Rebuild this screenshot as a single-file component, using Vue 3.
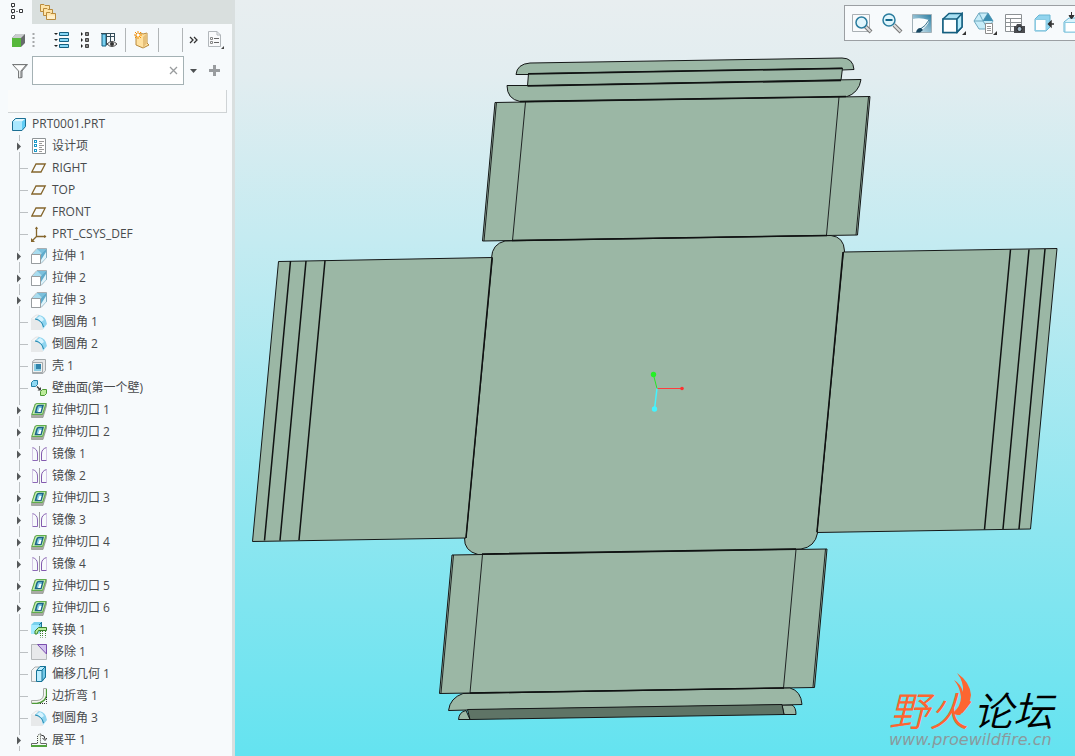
<template>
    <div class="workspace">
        <!-- Shared icon shapes -->
        <svg class="sprite" aria-hidden="true">
            <symbol id="part" viewBox="0 0 16 16">
                <path d="M.5 5.500 3.500 2.500H13.500V10.500L10 14.500H.5Z" fill="#62cdf5" stroke="#1c6f93" />
                <path d="M1 5.500H10V14H1Z" fill="#a9e8ff" />
                <path d="M1 5.500 4 3H13L10 5.500Z" fill="#e0f8ff" />
            </symbol>
            <symbol id="design" viewBox="0 0 16 16">
                <path d="M1.500.5H14.500V15.500H1.500Z" fill="#fff" stroke="#8f9497" />
                <path d="M3 2h3v3H3zM3 6h3v3H3zM3 11h3v3H3z" fill="#1d9ac9" />
                <path d="M4 3h1v1H4zM4 7h1v1H4zM4 12h1v1H4z" fill="#fff" />
                <path d="M8 3.500h5M8 5.500h3M8 7.500h5M8 9.500h3M8 11.500h5M8 13.500h3" stroke="#9a9a9a" />
            </symbol>
            <symbol id="plane" viewBox="0 0 16 16">
                <path d="M.8 12 5 4H14.200L10 12Z" fill="none" stroke="#85662c" stroke-width="1.300" />
            </symbol>
            <symbol id="csys" viewBox="0 0 16 16">
                <path d="M5.500 1V10.500H15M5.500 10.500 1 15" fill="none" stroke="#85662c" stroke-width="1.300" />
                <path d="M4 3 5.500.5 7 3zM13 9l2.500 1.500L13 12zM0 12v4h4z" fill="#85662c" />
            </symbol>
            <symbol id="extrude" viewBox="0 0 16 16">
                <path d="M.5 6.500 6 .5H15.500V9.500L10 15.500H.5Z" fill="#f7fafb" stroke="#a9aeb1" />
                <path d="M6 1H15L10 6H1.500Z" fill="#a8dcef" />
                <path d="M6 1H15L11 5.500Z" fill="#7bc0dc" />
                <path d="M10 6 15.500.5V9.500L10 15Z" fill="#5fabcb" />
                <path d="M10 12 15 4V10L10 15Z" fill="#dff4fb" />
                <path d="M.5 6.500H9.500V15.500H.5Z" fill="#fff" stroke="#989da0" />
            </symbol>
            <symbol id="round" viewBox="0 0 16 16">
                <path d="M0 5H4Q11 6 12 16H0Z" fill="#e7e9ea" />
                <path d="M0 5 5 1H8L4 5" fill="#f4f5f5" stroke="#d0d3d4" stroke-width=".5" />
                <path d="M4 5 8 1Q15 2 16 10L12 15Q11 7 4 5Z" fill="#8ed4ef" />
                <path d="M6 4 9 2Q12 3 13 6L10 8Z" fill="#d5f3ff" />
                <path d="M4 5Q11 6 12.500 13" fill="none" stroke="#2687ad" />
            </symbol>
            <symbol id="shell" viewBox="0 0 16 16">
                <path d="M1.500 3.500 4 1.500H14.500V12.500L12 15.500H1.500Z" fill="#e5e7e8" stroke="#a4a9ab" />
                <path d="M1.500 4.500H11.500V14.500H1.500Z" fill="#eef0f0" stroke="#a4a9ab" />
                <path d="M3 6H10V13H3Z" fill="#8ccde3" />
                <path d="M5 6H10V11H5Z" fill="#3184ab" />
            </symbol>
            <symbol id="wall" viewBox="0 0 16 16">
                <path d="M.5 2.500 2.500.5H6.500V4.500L4.500 6.500H.5Z" fill="#90daf4" stroke="#2783a8" />
                <path d="M9.500 11.500 11.500 9.500H15.500V13.500L13.500 15.500H9.500Z" fill="#bdec9b" stroke="#4d9b35" />
                <path d="M6 6.500 9 9.500" stroke="#444" stroke-width="1.500" />
                <path d="M10 7V10.500H6.500Z" fill="#444" />
            </symbol>
            <symbol id="cut" viewBox="0 0 16 16">
                <path d="M.5 13.500 4 2 15.500 1.500V4L12 15.500H.5Z" fill="#a9aaa4" stroke="#858983" stroke-width=".6" />
                <path d="M.8 12.500 4 3Q4.500 1.500 6 1.500H15L11.500 12.500Z" fill="#c4edac" stroke="#60ad4c" />
                <path d="M4.500 10.500 6 5Q6.500 3.500 8 3.500H12L10 10.500Z" fill="#80cce4" stroke="#1d6487" stroke-width="1.500" />
                <path d="M7 10 8.500 6H10.500L9.500 10Z" fill="#fff" />
            </symbol>
            <symbol id="mirror" viewBox="0 0 16 16">
                <path d="M1.500 2V14" stroke="#d4c7e5" />
                <path d="M1.500 1.500Q6.500 3 6.500 8V14.500H1.500" fill="none" stroke="#8d69b6" />
                <path d="M8.500 0V16" stroke="#9c9ca0" />
                <path d="M15.500 2V14" stroke="#d4c7e5" />
                <path d="M15.500 1.500Q10.500 3 10.500 8V14.500H15.500" fill="none" stroke="#8359ae" />
            </symbol>
            <symbol id="convert" viewBox="0 0 16 16">
                <path d="M0 3 3 0H11V8L8 12H0Z" fill="#77d0ec" />
                <path d="M0 3H8V12H0Z" fill="#a5ebff" />
                <path d="M10.500 0V6M8 3 10 1" fill="none" stroke="#1b7394" />
                <path d="M4 12V9L7.500 5.500H15.500V8.500H7.500L6 12Z" fill="#b7ec9a" stroke="#39812b" />
                <path d="M9.500 9V15.500M11.500 9V15.500M14.500 9V15.500" stroke="#39812b" stroke-dasharray="1 1" />
            </symbol>
            <symbol id="remove" viewBox="0 0 16 16">
                <path d="M.5.500H15.500V15.500H.5Z" fill="#e8e9eb" stroke="#b5b8ba" />
                <path d="M6.500.5H15.500V10Z" fill="#d2c2ef" stroke="#7a4fae" />
            </symbol>
            <symbol id="offset" viewBox="0 0 16 16">
                <path d="M.5 4.500 4 1H11V11L8 15.500H.5Z" fill="#f3f4f4" stroke="#aaafb1" />
                <path d="M5.500 4.500 9 .500H14.500V11L11 15.500H5.500Z" fill="#bceeff" stroke="#167397" />
                <path d="M11 4 14.500.5V11L11 15Z" fill="#75c9e7" stroke="#167397" />
                <path d="M6 4.500H11" stroke="#167397" />
            </symbol>
            <symbol id="bend" viewBox="0 0 16 16">
                <path d="M12.500.5H15.500V8Q14 15 6 15.500H.5V12.500H6Q12 12 12.500 7Z" fill="#f5f5f1" stroke="#a6a9a4" />
                <path d="M15.500 1V8Q14 14 6 15.500H1" fill="none" stroke="#4d9b39" stroke-width="1.300" />
                <path d="M9 15.500H15.500V9" fill="none" stroke="#333" stroke-dasharray="1 1" />
            </symbol>
            <symbol id="flatten" viewBox="0 0 16 16">
                <path d="M6.500 11V3.500L9.500 1.500V11" fill="#f1f8ed" stroke="#444" stroke-dasharray="1 1" />
                <path d="M.5 11.500H6.500M9.500 11.500H15.500V13.500M.5 11.500V14" fill="none" stroke="#666" />
                <path d="M0 14H16" stroke="#53a43d" stroke-width="2" />
                <path d="M10 3Q14 3 14 7M11.500 6 14 8.500 16 6" fill="none" stroke="#333" />
            </symbol>
            <symbol id="leaf" viewBox="0 0 19 22">
                <path d="M7.500 0V22M8 11.500H16" stroke="#bcc0c3" fill="none" />
            </symbol>
            <symbol id="branch" viewBox="0 0 19 22">
                <path d="M7.500 0V6M7.500 17V22" stroke="#bcc0c3" />
                <path d="M5 7.500 9 11.500 5 15.500Z" fill="#55585a" />
            </symbol>
            <symbol id="zoom-window" viewBox="0 0 22 22">
                <path d="M1.500 2.500H18.500V19.500H1.500Z" fill="#fafbfc" stroke="#aab0b4" />
                <path d="M14 14 20 20" stroke="#777" stroke-width="4" />
                <path d="M14 14 19.500 19.500" stroke="#ddd" stroke-width="2" />
                <circle cx="10.500" cy="10.500" r="5.500" fill="#e0f6fd" stroke="#2b7d9f" stroke-width="1.500" />
            </symbol>
            <symbol id="zoom-out" viewBox="0 0 22 22">
                <path d="M13 13 20 20" stroke="#777" stroke-width="4" />
                <path d="M13 13 19.500 19.500" stroke="#ddd" stroke-width="2" />
                <circle cx="8" cy="8" r="6" fill="#e0f6fd" stroke="#2b7d9f" stroke-width="1.500" />
                <path d="M4.500 8H11.500" stroke="#14668a" stroke-width="2" />
            </symbol>
            <symbol id="repaint" viewBox="0 0 22 22">
                <path d="M1.500 2.500H20.500V20.500H1.500Z" fill="url(#paint)" stroke="#a2b1b8" />
                <path d="M2 7Q9 5 18 8Q18 13 8 20H2Z" fill="#f9fcfd" />
                <path d="M8 18Q15 14 18 8" fill="none" stroke="#35718c" />
                <path d="M5 20.500Q6 15.500 10 16L12 18 9 20.500Z" fill="#164762" />
            </symbol>
            <symbol id="display" viewBox="0 0 22 22">
                <path d="M1 7 7 1.500H20V15L15 20.500H1Z" fill="#a8e0f3" stroke="#155f80" stroke-width="1.500" />
                <path d="M1 7H15V20.500H1Z" fill="#fff" stroke="#155f80" stroke-width="1.500" />
                <path d="M15 7 20 1.500V15L15 20Z" fill="#b8edfc" stroke="#155f80" stroke-width="1.500" />
            </symbol>
            <symbol id="views" viewBox="0 0 22 22">
                <path d="M1 9 6 1H15L20 9 15 17H6Z" fill="#c6ecf8" stroke="#6da8bf" />
                <path d="M1 9H10L15 1M10 9 15 17M6 1 10 9" fill="none" stroke="#6da8bf" />
                <path d="M15 1 20 9H10Z" fill="#3d8eb0" />
                <path d="M12.500 11.500H19.500V21.500H12.500Z" fill="#fff" stroke="#8c8c8c" />
                <path d="M14 14.500H18M14 16.500H18M14 18.500H18" stroke="#999" />
            </symbol>
            <symbol id="view-manager" viewBox="0 0 22 22">
                <path d="M2.500 2.500H18.500V19.500H2.500ZM2.500 6.500H18.500M2.500 10.500H18.500M2.500 14.500H18.500M7.500 6V19" fill="#fff" stroke="#8c9194" />
                <path d="M11 14H13L14 12H18L19 14H22V21H11Z" fill="#4a4c50" />
                <circle cx="16.500" cy="17" r="2.500" fill="#a9bfd0" stroke="#222" />
            </symbol>
            <symbol id="annotate" viewBox="0 0 22 22">
                <path d="M2 7 6 3H17V15L13 19H2Z" fill="#91d4ee" stroke="#69b6d3" />
                <path d="M2.500 7.500H13V18.500H2.500Z" fill="#fff" stroke="#8ccbe2" />
                <path d="M16 12H21M18 9.500 15.500 12 18 14.500Z" fill="#333" stroke="#333" stroke-width="1.500" />
            </symbol>
            <symbol id="spin" viewBox="0 0 22 22">
                <path d="M1 10 6 6H20V20H1Z" fill="#daf4fc" stroke="#69b6d3" />
                <path d="M2 10.500H16V20H2Z" fill="#fff" stroke="#8ccbe2" />
                <path d="M8.500 0V4M6 3.500H11L8.500 7Z" fill="#333" stroke="#333" />
            </symbol>
            <linearGradient id="paint" x1="0" y1="1" x2="1" y2="0">
                <stop offset="0" stop-color="#eaf7fc" />
                <stop offset="1" stop-color="#297ca1" />
            </linearGradient>
        </svg>

        <aside class="panel">
            <nav class="tabs">
                <button class="tab tab--active" aria-label="Model Tree">
                    <svg width="16" height="22" viewBox="0 0 16 22">
                        <path d="M4.500 5V15M5 10.500H12" stroke="#77797c" stroke-dasharray="2 1" />
                        <path d="M3.500 2.500h3v3h-3zM3.500 8.500h3v3h-3zM11.500 8.500h3v3h-3zM3.500 14.500h3v3h-3z" fill="#fff" stroke="#37393c" />
                    </svg>
                </button>
                <button class="tab" aria-label="Folder Browser">
                    <svg width="18" height="18" viewBox="0 0 18 18">
                        <g fill="#ffe4a8" stroke="#b98b3d">
                            <path d="M1.500 1.500H5L6 2.500H10.500V8.500H1.500Z" />
                            <path d="M4.500 5.500H8L9 6.500H13.500V12.500H4.500Z" />
                            <path d="M7.500 9.500H11L12 10.500H16.500V16.500H7.500Z" />
                        </g>
                        <path d="M8 12.500H16V16H8Z" fill="#fff0cd" />
                    </svg>
                </button>
            </nav>

            <div class="tools">
                <button class="tool" aria-label="Model">
                    <svg width="14" height="16" viewBox="0 0 14 16">
                        <path d="M0 6 4 2H13V11L9 15H0Z" fill="#686b6d" />
                        <path d="M0 6 4 2H13L9 6Z" fill="#c9cccd" />
                        <path d="M0 6H9V15H0Z" fill="#57b83b" />
                    </svg>
                </button>
                <svg class="grip" width="3" height="16" viewBox="0 0 3 16">
                    <path d="M1.500 1V16" stroke="#a6a8aa" stroke-width="2" stroke-dasharray="2 2" />
                </svg>
                <button class="tool tool--list" aria-label="Expand All">
                    <svg width="16" height="18" viewBox="0 0 16 18">
                        <path d="M5.500 1.500h9v3h-9zM5.500 7.500h9v3h-9zM5.500 13.500h9v3h-9z" fill="#86d7f6" stroke="#155f80" />
                        <path d="M0 2h4L2 4zM0 8h4L2 10zM0 14h4L2 16z" fill="#222" />
                    </svg>
                </button>
                <button class="tool" aria-label="Collapse All">
                    <svg width="9" height="18" viewBox="0 0 9 18">
                        <path d="M5.500 1.500h3v3h-3zM5.500 7.500h3v3h-3zM5.500 13.500h3v3h-3z" fill="#888" stroke="#444" />
                        <path d="M1 1 3 3 1 5zM1 7 3 9 1 11zM1 13 3 15 1 17z" fill="#222" />
                    </svg>
                </button>
                <button class="tool tool--columns" aria-label="Tree Columns">
                    <svg width="16" height="18" viewBox="0 0 16 18">
                        <path d="M1 3H5V15H1Z" fill="#7ad1f1" stroke="#155f80" />
                        <path d="M0 2.500H13M5.500 2V14M9.500 2V12M13.500 2V10M5 5.500H13" fill="none" stroke="#344c58" />
                        <path d="M6 13Q11 8 16 13Q11 18 6 13Z" fill="#eee" stroke="#444" />
                        <circle cx="11" cy="13" r="2" fill="#333" />
                    </svg>
                </button>
                <span class="divider"></span>
                <button class="tool" aria-label="New Component">
                    <svg width="16" height="18" viewBox="0 0 16 18">
                        <path d="M2 4 7 2 9 3 13 2V12L15 14 9 17 2 14Z" fill="#ffe1a0" stroke="#b8893b" />
                        <path d="M9 6 13 2V12L9 17Z" fill="#e6c07a" />
                        <path d="M4 0V8M0 4H8M1 1 7 7M7 1 1 7" stroke="#f58d00" />
                        <circle cx="4" cy="4" r="1.500" fill="#fff" />
                    </svg>
                </button>
                <span class="divider divider--after"></span>
                <span class="divider divider--wide"></span>
                <button class="tool" aria-label="More">
                    <svg width="9" height="8" viewBox="0 0 9 8">
                        <path d="M1 1 4 4 1 7M5 1 8 4 5 7" fill="none" stroke="#333" stroke-width="1.300" />
                    </svg>
                </button>
                <button class="tool tool--page" aria-label="Settings">
                    <svg width="18" height="20" viewBox="0 0 18 20">
                        <path d="M1.500 1.500H10L13.500 5V16.500H1.500Z" fill="#f9fafb" stroke="#b2b7bb" />
                        <path d="M10 1.500V5H13.500" fill="none" stroke="#b2b7bb" />
                        <path d="M7 8.500H12M7 12.500H12" stroke="#666" />
                        <path d="M3.500 7.500h2v2h-2zM3.500 11.500h2v2h-2z" fill="#fff" stroke="#888" />
                        <path d="M17 16V19H14Z" fill="#444" />
                    </svg>
                </button>
            </div>

            <div class="filter">
                <svg width="16" height="16" viewBox="0 0 16 16">
                    <path d="M.500 1.500H15.500L10 8V14.500L6.500 15V8Z" fill="#e8eaea" stroke="#77797a" />
                    <path d="M3 3H13L8 8Z" fill="#fff" />
                    <path d="M9 8V15M9 8 14 2" stroke="#747678" />
                </svg>
                <div class="filter__field">
                    <input v-model="query" type="text" aria-label="Filter" />
                    <button aria-label="Clear" @click="query = ''">
                        <svg width="9" height="9" viewBox="0 0 9 9">
                            <path d="M1 1 8 8M8 1 1 8" stroke="#999c9e" stroke-width="1.300" />
                        </svg>
                    </button>
                </div>
                <button aria-label="Filter options">
                    <svg width="7" height="4" viewBox="0 0 7 4"><path d="M0 0H7L3.500 4Z" fill="#4d5052" /></svg>
                </button>
                <button class="filter__add" aria-label="Add">
                    <svg width="11" height="11" viewBox="0 0 11 11"><path d="M5.500 0V11M0 5.500H11" stroke="#999c9f" stroke-width="3" /></svg>
                </button>
            </div>

            <div class="column-head"></div>

            <ul class="tree">
                <li class="tree__row tree__row--root">
                    <svg class="tree__icon" width="16" height="16"><use href="#part" /></svg>
                    <span>PRT0001.PRT</span>
                </li>
                <li v-for="item in features" :key="item.name" class="tree__row">
                    <button v-if="item.open" class="tree__gutter" :aria-label="item.name">
                        <svg width="19" height="22"><use href="#branch" /></svg>
                    </button>
                    <span v-else class="tree__gutter">
                        <svg width="19" height="22"><use href="#leaf" /></svg>
                    </span>
                    <svg class="tree__icon" width="16" height="16"><use :href="`#${item.icon}`" /></svg>
                    <span>{{ item.name }}</span>
                </li>
            </ul>
        </aside>

        <main class="viewport">
            <!-- Flattened sheet metal box -->
            <svg class="model" viewBox="235 0 840 756">
                <g class="face">
                    <path d="M516 74.500Q517 64 530 63L842 58Q853 58 854 69.500L842 70 528 74.500Z" />
                    <path d="M528.500 73.500 842.500 68 841 80 527.500 86Z" />
                    <path d="M507 85.500 527 85.500 861 79.500Q859 93 846 97L520 101.500Q507 99 507 85.500Z" />
                    <path d="M495 102.500 870 96.500 857.500 235 482.500 241Z" />
                    <path d="M491.500 258Q492 244 505 241L831 235.500Q844 237 844.500 251L817.500 533Q815 547 801 549L478 554.500Q464 551 464.500 538Z" />
                    <path d="M278.500 261.500 492.500 257.500 466 538 252.500 541.500Z" />
                    <path d="M843.500 252 1057 248.500 1030.500 529 817 532.500Z" />
                    <path d="M452 555 827 549 814.500 687.500 439.500 693.500Z" />
                    <path d="M458.500 719.500Q459 712 466 710.500L470 719.500ZM782 705H792Q796 707 796 714.500H784Z" />
                    <path d="M448.500 710.500Q450 698 463 693.500L790 688Q801 691 802 704.500L782 705 467 710Z" />
                    <path class="face--dark" d="M467.500 709.500 782 704.500 784 714.500 470 719.500Z" />
                </g>
                <g class="edge">
                    <path d="M525.500 102 512.500 240.500M839 97 826.500 235M496.500 102 484 241M868.500 97 856 235" />
                    <path d="M482.500 554.500 470 693M796 549.500 783.500 688M453.500 555 441 693M825.500 549 813 687" />
                </g>
                <g class="fold">
                    <path d="M528 74 842 68.500M527.500 86 841 80.500M520 101.500 846 96.500M512 240.500 827 235.500M482 554 796 549M470 693 784 688" />
                    <path d="M290.500 261 264.500 540.500M306 261 280 540.500M325 260.500 299 540M492 258 466 538" />
                    <path d="M1010.500 249.500 984.500 529.500M1029 249.500 1003 529M1045 249 1019 529M843 252 817 532" />
                </g>
                <path d="M657 388.500 682 388.500" stroke="#ff3c3c" />
                <path d="M657 388.500 653.500 375" stroke="#26e626" />
                <path d="M657 388.500 654.500 409" stroke="#42f4ff" stroke-width="1.500" />
                <circle cx="682" cy="388.500" r="1.800" fill="#ff3030" />
                <circle cx="653.500" cy="374.500" r="2.700" fill="#26f026" />
                <circle cx="654.500" cy="409" r="2.700" fill="#42f4ff" />
            </svg>

            <div class="view-tools">
                <button
                    v-for="tool in viewTools"
                    :key="tool.icon"
                    :aria-label="tool.label"
                    :class="['view-tools__item', { 'view-tools__item--menu': tool.menu }]"
                >
                    <svg width="22" height="22"><use :href="`#${tool.icon}`" /></svg>
                    <span v-if="tool.menu" class="view-tools__corner"></span>
                </button>
            </div>

            <div class="watermark">
                <div class="watermark__name">
                    <span class="watermark__fire">野火</span>
                    <span>论坛</span>
                </div>
                <svg class="watermark__flame" width="22" height="44" viewBox="0 0 22 44">
                    <path d="M6 1Q19 10 20 23Q19 34 9 43Q4 43 2 41Q10 34 10 25Q9 15 3 8Q10 12 12 20Q13 10 6 1Z" fill="#fd6530" />
                </svg>
                <div class="watermark__site">www.proewildfire.cn</div>
            </div>
        </main>
    </div>
</template>

<script setup>
import { ref } from 'vue'

const query = ref('')

// Feature tree in regeneration order; open marks rows with an expander
const features = [
    { name: '设计项', icon: 'design', open: true },
    { name: 'RIGHT', icon: 'plane' },
    { name: 'TOP', icon: 'plane' },
    { name: 'FRONT', icon: 'plane' },
    { name: 'PRT_CSYS_DEF', icon: 'csys' },
    { name: '拉伸 1', icon: 'extrude', open: true },
    { name: '拉伸 2', icon: 'extrude', open: true },
    { name: '拉伸 3', icon: 'extrude', open: true },
    { name: '倒圆角 1', icon: 'round' },
    { name: '倒圆角 2', icon: 'round' },
    { name: '壳 1', icon: 'shell' },
    { name: '壁曲面(第一个壁)', icon: 'wall' },
    { name: '拉伸切口 1', icon: 'cut', open: true },
    { name: '拉伸切口 2', icon: 'cut', open: true },
    { name: '镜像 1', icon: 'mirror', open: true },
    { name: '镜像 2', icon: 'mirror', open: true },
    { name: '拉伸切口 3', icon: 'cut', open: true },
    { name: '镜像 3', icon: 'mirror', open: true },
    { name: '拉伸切口 4', icon: 'cut', open: true },
    { name: '镜像 4', icon: 'mirror', open: true },
    { name: '拉伸切口 5', icon: 'cut', open: true },
    { name: '拉伸切口 6', icon: 'cut', open: true },
    { name: '转换 1', icon: 'convert' },
    { name: '移除 1', icon: 'remove' },
    { name: '偏移几何 1', icon: 'offset' },
    { name: '边折弯 1', icon: 'bend' },
    { name: '倒圆角 3', icon: 'round' },
    { name: '展平 1', icon: 'flatten', open: true }
]

const viewTools = [
    { icon: 'zoom-window', label: 'Zoom In' },
    { icon: 'zoom-out', label: 'Zoom Out' },
    { icon: 'repaint', label: 'Repaint' },
    { icon: 'display', label: 'Display Style', menu: true },
    { icon: 'views', label: 'Saved Orientations', menu: true },
    { icon: 'view-manager', label: 'View Manager' },
    { icon: 'annotate', label: 'Annotation Display' },
    { icon: 'spin', label: 'Spin Center' }
]
</script>

<style>
body {
    margin: 0;
}
</style>

<style scoped>
.workspace {
    display: flex;
    min-height: 100vh;
    font-family: "Open Sans", "Noto Sans CJK SC", sans-serif;
    font-size: 12px;
    color: #484a4c;
    overflow: hidden;
}

.sprite {
    position: absolute;
    width: 0;
    height: 0;
}

button {
    display: flex;
    align-items: center;
    justify-content: center;
    padding: 0;
    border: 0;
    background: none;
}

svg {
    display: block;
    flex-shrink: 0;
}

.panel {
    box-sizing: border-box;
    flex: 0 0 235px;
    border-right: 3px solid #d9dfdf;
    background: #f7fafc;
}

.tabs {
    display: flex;
    height: 24px;
    background: #d9dfde;
}

.tab {
    width: 32px;
}

.tab--active {
    background: #f7fafc;
}

.tools {
    display: flex;
    align-items: center;
    height: 32px;
    padding-left: 12px;
}

.grip {
    margin-left: 6px;
}

.tool--list {
    margin-left: 19px;
    margin-right: 10px;
}

.tool--columns {
    margin: 0 8px 0 12px;
}

.tool--page {
    margin-left: 9px;
}

.divider {
    width: 1px;
    height: 24px;
    margin-right: 8px;
    background: #b1b5b7;
}

.divider--after {
    margin-left: 8px;
}

.divider--wide {
    margin: 0 6px 0 15px;
}

.filter {
    display: flex;
    align-items: center;
    padding-left: 12px;
}

.filter__field {
    box-sizing: border-box;
    display: flex;
    width: 152px;
    height: 29px;
    margin: 0 6px 0 4px;
    padding-right: 5px;
    border: 1px solid #a4b1b4;
    background: #fff;
}

.filter__field input {
    flex: 1;
    min-width: 0;
    padding: 0 4px;
    border: 0;
    outline: 0;
    background: transparent;
    font: inherit;
}

.filter__add {
    margin-left: 12px;
}

.column-head {
    height: 22px;
    margin: 5px 5px 0 8px;
    border-right: 1px solid #cfd3d5;
    border-bottom: 1px solid #cfd3d5;
    background: #fafbfb;
}

.tree {
    margin: 0;
    padding: 0 0 4px 12px;
    list-style: none;
}

.tree__row {
    display: flex;
    align-items: center;
    height: 22px;
    line-height: 22px;
    white-space: nowrap;
}

.tree__row--root .tree__icon {
    margin-right: 4px;
}

.tree__icon {
    margin-right: 5px;
}

.tree__gutter {
    width: 19px;
    height: 22px;
}

.viewport {
    position: relative;
    flex: 1;
    min-width: 0;
    overflow: hidden;
    background: linear-gradient(#e8eef0 0%, #e2edf0 10%, #c4ebf1 32%, #8de6f0 70%, #64e3f0 100%);
}

.model {
    width: 100%;
    height: auto;
}

.face {
    fill: #9bb7a5;
    stroke: #151818;
    stroke-width: 1;
}

.face--dark {
    fill: #5f7466;
}

.edge {
    fill: none;
    stroke: #202424;
    stroke-width: 1;
}

.fold {
    fill: none;
    stroke: #101212;
    stroke-width: 1.5;
}

.view-tools {
    position: absolute;
    top: 5px;
    right: 0;
    box-sizing: border-box;
    display: flex;
    width: 231px;
    height: 36px;
    padding-left: 2px;
    overflow: hidden;
    border: 1px solid #9b9fa3;
    border-right: 0;
    background: #f7fafc;
}

.view-tools__item {
    position: relative;
    flex: 0 0 30px;
}

.view-tools__item--menu {
    flex-basis: 31px;
}

.view-tools__corner {
    position: absolute;
    right: 2px;
    bottom: 5px;
    border-left: 4px solid transparent;
    border-bottom: 4px solid #333;
}

.watermark {
    position: absolute;
    right: 16px;
    bottom: 6px;
    width: 170px;
}

.watermark__name {
    display: flex;
    gap: 4px;
    font-family: "Liberation Sans", "Noto Sans CJK SC", sans-serif;
    font-size: 40px;
    font-style: italic;
    font-weight: 350;
    line-height: 36px;
    color: #000;
}

.watermark__fire {
    color: #fd6530;
}

.watermark__flame {
    position: absolute;
    top: -22px;
    left: 62px;
}

.watermark__site {
    font-family: "DejaVu Sans", sans-serif;
    font-size: 16px;
    font-style: italic;
    line-height: 20px;
    color: #8a9a9d;
}
</style>
